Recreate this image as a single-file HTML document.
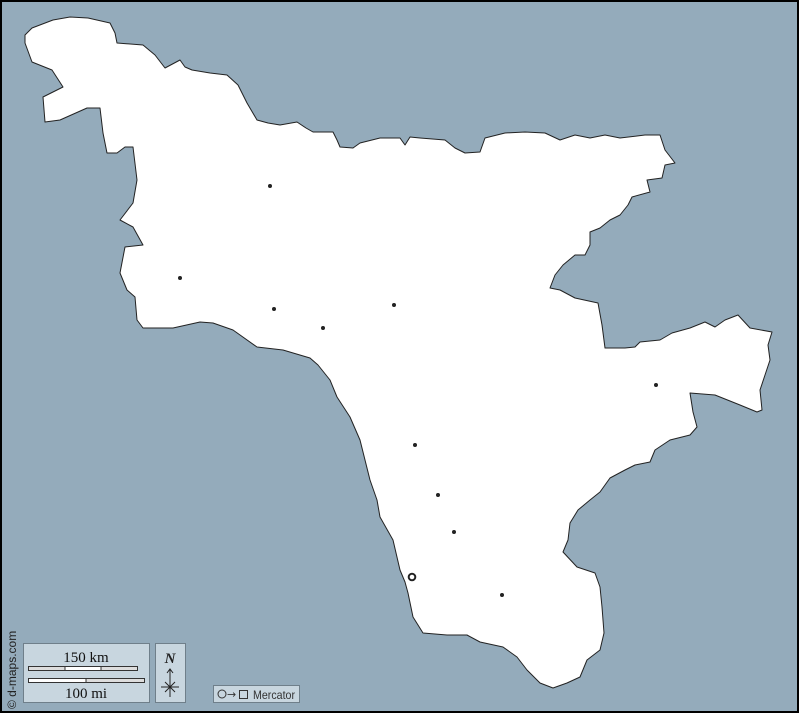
<!DOCTYPE html>
<html><head><meta charset="utf-8"><style>
html,body{margin:0;padding:0;background:#000;}
svg{display:block}
text{font-family:"Liberation Serif",serif}
</style></head><body>
<svg width="799" height="713" viewBox="0 0 799 713" xmlns="http://www.w3.org/2000/svg">
<rect x="0" y="0" width="799" height="713" fill="#000"/>
<rect x="2" y="2" width="795" height="709" fill="#94abbb"/>
<polygon fill="#fff" stroke="#222" stroke-width="1" stroke-linejoin="round" points="
25,35 32,28 53,20 70,17 88,18 110,23 115,33 117,43 143,45 155,55 165,68 180,60 185,67 192,70 210,73 227,75 238,85 247,103 257,120 268,123 280,125 297,122 306,128 313,132 333,132 337,140 340,147 353,148 360,143 380,138 400,138 405,145 410,137 420,138 445,140 455,148 465,153 480,152 485,138 505,133 525,132 545,133 560,140 575,135 590,138 605,135 620,138 645,135 660,135 665,150 675,163 665,165 662,178 647,180 650,192 632,197 628,205 620,215 610,220 600,228 590,232 590,245 585,255 575,255 563,265 555,275 550,288 560,290 575,298 598,303 602,325 605,348 625,348 635,347 640,342 660,340 672,333 690,328 705,322 715,327 725,320 738,315 750,328 772,332 768,345 770,360 765,375 760,390 762,410 757,412 740,405 715,395 690,393 693,412 697,427 690,435 670,440 655,450 650,462 635,465 625,470 610,478 600,492 590,500 578,510 570,523 568,540 563,552 577,567 595,573 600,587 602,607 604,633 600,650 587,660 580,677 567,683 553,688 540,683 527,670 517,657 503,647 480,642 467,635 447,635 423,633 413,617 408,593 405,582 400,570 393,540 380,517 377,500 370,480 360,440 350,417 337,397 330,380 318,365 310,358 283,350 257,347 233,330 213,323 200,322 173,328 143,328 137,320 135,297 127,290 120,273 125,247 143,245 133,227 120,220 133,203 137,180 133,147 125,147 117,153 107,153 103,133 100,108 87,108 60,120 45,122 43,97 63,87 52,70 32,62 25,43"/>
<g fill="#222">
<circle cx="270" cy="186" r="2"/><circle cx="180" cy="278" r="2"/><circle cx="274" cy="309" r="2"/><circle cx="323" cy="328" r="2"/><circle cx="394" cy="305" r="2"/><circle cx="415" cy="445" r="2"/><circle cx="438" cy="495" r="2"/><circle cx="454" cy="532" r="2"/><circle cx="502" cy="595" r="2"/><circle cx="656" cy="385" r="2"/>
</g>
<circle cx="412" cy="577" r="3.3" fill="#fff" stroke="#222" stroke-width="2"/>
<text x="16" y="709" transform="rotate(-90 16 709)" font-size="12" fill="#222" style="font-family:'Liberation Sans',sans-serif">© d-maps.com</text>
<rect x="23.5" y="643.5" width="126" height="59" fill="#c8d6df" stroke="#6f7f8a"/>
<text x="86" y="662" text-anchor="middle" font-size="15" fill="#111">150 km</text>
<rect x="28.5" y="666.5" width="109" height="4" fill="#ddd" stroke="#333"/>
<rect x="65" y="667" width="36" height="3" fill="#fff"/>
<line x1="65" y1="666" x2="65" y2="671" stroke="#333"/><line x1="101" y1="666" x2="101" y2="671" stroke="#333"/>
<rect x="28.5" y="678.5" width="116" height="4" fill="#ddd" stroke="#333"/>
<rect x="29" y="679" width="57" height="3" fill="#fff"/>
<line x1="86" y1="678" x2="86" y2="683" stroke="#333"/>
<text x="86" y="698" text-anchor="middle" font-size="15" fill="#111">100 mi</text>
<rect x="155.5" y="643.5" width="30" height="59" fill="#c8d6df" stroke="#6f7f8a"/>
<text x="170" y="663" text-anchor="middle" font-size="15" font-style="italic" font-weight="bold" fill="#222">N</text>
<line x1="170" y1="669" x2="170" y2="697" stroke="#222"/>
<path d="M167,673 L170,669 L173,673" fill="none" stroke="#222"/>
<line x1="161" y1="687" x2="179" y2="687" stroke="#222"/>
<line x1="165" y1="682" x2="175" y2="692" stroke="#222"/><line x1="175" y1="682" x2="165" y2="692" stroke="#222"/>
<rect x="213.5" y="685.5" width="86" height="17" fill="#c8d6df" stroke="#6f7f8a"/>
<circle cx="222" cy="694" r="4" fill="none" stroke="#333"/>
<text x="227" y="698" font-size="11" fill="#333" style="font-family:'DejaVu Sans',sans-serif">→</text>
<rect x="239.5" y="690.5" width="8" height="8" fill="none" stroke="#333"/>
<text x="253" y="699" font-size="12" textLength="42" lengthAdjust="spacingAndGlyphs" fill="#333" style="font-family:'Liberation Sans',sans-serif">Mercator</text>
</svg>
</body></html>
